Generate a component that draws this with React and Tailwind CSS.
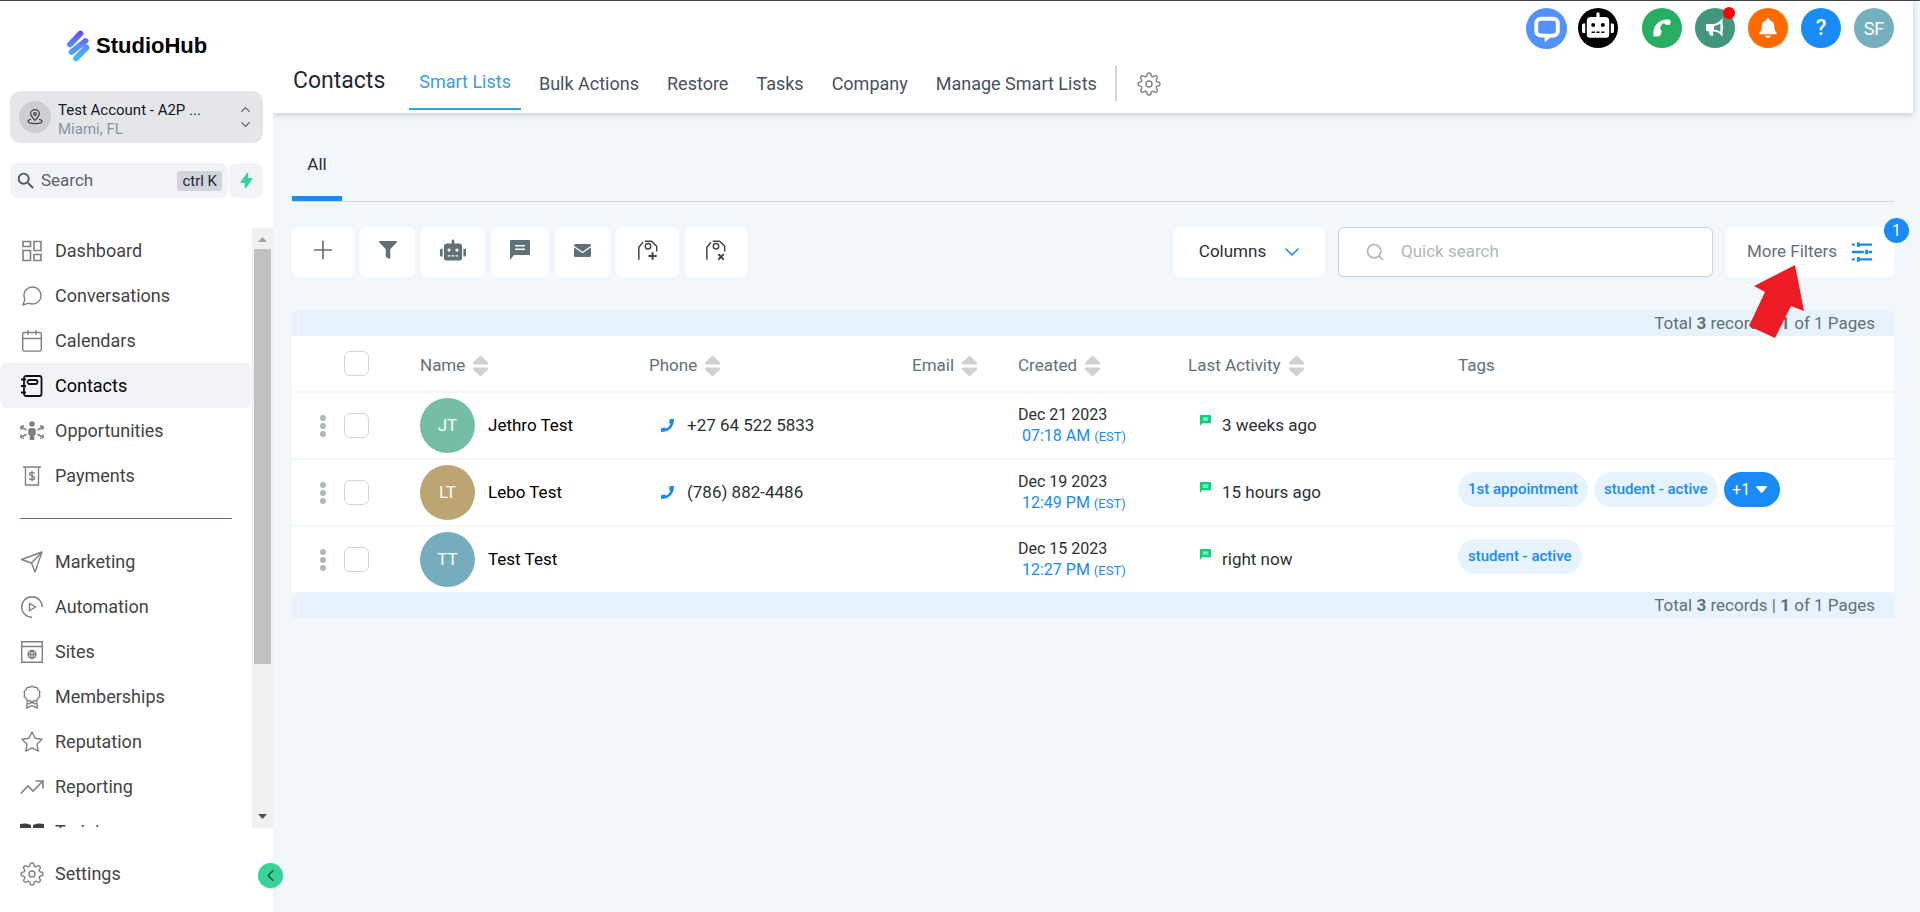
import { useState } from "react";
import { FaRobot, FaFilter, FaBell } from "react-icons/fa";
import { FiMessageCircle, FiSettings, FiStar, FiSearch, FiChevronDown, FiChevronUp, FiChevronLeft } from "react-icons/fi";
import { HiLightningBolt } from "react-icons/hi";
import { MdSearch } from "react-icons/md";

function Icon({ size = 24, children, ...rest }) {
  return (
    <svg width={size} height={size} viewBox="0 0 24 24" fill="none" stroke="currentColor" strokeWidth="1.4" aria-hidden="true" {...rest}>
      {children}
    </svg>
  );
}

const DashboardIcon = () => (
  <Icon strokeWidth="1.600">
    <path d="M3 2.500h7.500v5H3zM14 2.500h7v9h-7zM3 11.500h7.500v10H3zM14 15.500h7v6h-7z" />
  </Icon>
);

const CalendarIcon = () => (
  <Icon>
    <rect x="2.700" y="3.500" width="18.600" height="18.600" rx="1.500" />
    <path d="M2.700 9.500h18.600M8 1v5M16 1v5" />
  </Icon>
);

const ContactsIcon = () => (
  <Icon strokeWidth="1.800">
    <rect x="4" y="2" width="17.500" height="20" rx="2" />
    <rect x="7.500" y="6" width="10" height="4" rx="2" />
    <path d="M1 5.500h5M1 12h5M1 18.500h5" />
  </Icon>
);

const OpportunitiesIcon = () => (
  <Icon strokeWidth="1.500">
    <circle cx="12" cy="5" r="2.800" fill="currentColor" stroke="none" />
    <path d="M8.300 11a2 2 0 0 1 2-2h3.400a2 2 0 0 1 2 2v5h-1.400v5H9.700v-5H8.300z" fill="currentColor" stroke="none" />
    <path d="M6.500 11 1 8M1 10.700V7.600l3-.8M6.500 15.500 1 18M1 15.500v3l3 .8M17.500 11 23 8M23 10.700V7.600l-3-.8M17.500 15.500 23 18M23 15.500v3l-3 .8" />
  </Icon>
);

const PaymentsIcon = () => (
  <Icon>
    <path d="M3 3h18M5.500 3v18h13V3" />
    <path d="M14.500 9.600c-.4-.9-1.300-1.200-2.500-1.200-1.400 0-2.400.6-2.400 1.700 0 2.700 5 1.100 5 3.800 0 1.100-1.100 1.800-2.500 1.800-1.300 0-2.300-.5-2.700-1.500M12 6.800v10.400" />
  </Icon>
);

const MarketingIcon = () => (
  <Icon strokeLinejoin="round">
    <path d="M22 2 1.500 9.500l10 3.500L15 22zM22 2 11.500 13" />
  </Icon>
);

const AutomationIcon = () => (
  <Icon>
    <path d="M12 22.300A10.300 10.300 0 1 1 22.300 12" />
    <path d="M9.500 8.500v7l6-3.500z" />
  </Icon>
);

const SitesIcon = () => (
  <Icon>
    <path d="M1.700 1.700h20.600v20.600H1.700zM1.700 6.500h20.600" />
    <circle cx="12" cy="14.500" r="4" />
    <path d="M8 14.500h8M12 10.500c-2.400 2.500-2.400 5.500 0 8M12 10.500c2.400 2.500 2.400 5.500 0 8" />
  </Icon>
);

const MembershipsIcon = () => (
  <Icon strokeLinejoin="round">
    <path d="M12 1.200l2.300 1.100 2.500.1 1.100 2.300 1.900 1.700-.4 2.600.4 2.500-1.900 1.700-1.100 2.300-2.500.2L12 16.800l-2.300-1.100-2.500-.2-1.100-2.300-1.900-1.700.4-2.500-.4-2.600 1.900-1.700 1.100-2.300 2.500-.1z" />
    <path d="M7.500 15.500 6.500 23l5.500-2.300 5.500 2.300-1-7.500M8 19.200l4-1.700 4 1.700" />
  </Icon>
);

const ReportingIcon = () => (
  <Icon strokeWidth="1.600">
    <path d="M.8 18.500 8 11l5 5 9.500-9.500M15.500 6h7.500v7.500" />
  </Icon>
);

const TrainingIcon = () => (
  <Icon fill="#3f3f3f" stroke="none">
    <path d="M0 4c4-1 8-.8 11 1v15c-3-1.600-7-1.800-11-1zM24 4c-4-1-8-.8-11 1v15c3-1.600 7-1.800 11-1z" />
  </Icon>
);

const TagIcon = ({ remove }) => (
  <Icon size={22} strokeWidth="1.600" className="text-[#444]">
    <path d="M2 22.500V9L6.500 3.500M8.500 2.500h7.500l5.500 5.500v5.500" strokeLinejoin="round" />
    <circle cx="12" cy="8" r="3" />
    {remove ? <path d="m14.500 16.500 6 6M20.500 16.500l-6 6" strokeWidth="2.200" /> : <path d="M17 14.500v8M12.500 18.500h9" strokeWidth="2.200" />}
  </Icon>
);

const CommentIcon = ({ size, color }) => (
  <svg width={size} height={size} viewBox="0 0 20 20" aria-hidden="true">
    <path d="M1 0h18a1 1 0 0 1 1 1v14H4l-4 5V1a1 1 0 0 1 1-1z" fill={color} />
    <path d="M5 5.700h10M5 9.200h10" stroke="#fff" strokeWidth="1.600" />
  </svg>
);

const MailIcon = () => (
  <svg width="17" height="13" viewBox="0 0 17 13" aria-hidden="true">
    <rect width="17" height="13" rx="1.500" fill="#607179" />
    <path d="m0 2.500 8.500 6 8.500-6" fill="none" stroke="#fff" strokeWidth="1.300" />
  </svg>
);

const CallIcon = () => (
  <svg width="13" height="13" viewBox="0 0 13 13" fill="#188bf6" aria-hidden="true">
    <path d="M8.700 0H13c.3 7.500-5 13-13 13V9.300l3.500-.9 1.500 1.200C7.200 8.800 8.600 7.200 9.300 4.800L8.100 3.400z" />
  </svg>
);

const SortIcon = () => (
  <svg width="15" height="22" viewBox="0 0 15 22" fill="#d1d1d1" aria-hidden="true">
    <path d="M7.500.5 15 7.500V9a.6.600 0 0 1-.6.500H.6A.6.600 0 0 1 0 9V7.500zM7.500 21.500 15 14.500V13a.6.600 0 0 0-.6-.5H.6A.6.600 0 0 0 0 13v1.500z" />
  </svg>
);

const mainNav = [
  { label: "Dashboard", icon: <DashboardIcon /> },
  { label: "Conversations", icon: <FiMessageCircle size={24} strokeWidth="1.4" /> },
  { label: "Calendars", icon: <CalendarIcon /> },
  { label: "Contacts", icon: <ContactsIcon />, active: true },
  { label: "Opportunities", icon: <OpportunitiesIcon /> },
  { label: "Payments", icon: <PaymentsIcon /> },
];

const moreNav = [
  { label: "Marketing", icon: <MarketingIcon /> },
  { label: "Automation", icon: <AutomationIcon /> },
  { label: "Sites", icon: <SitesIcon /> },
  { label: "Memberships", icon: <MembershipsIcon /> },
  { label: "Reputation", icon: <FiStar size={24} strokeWidth="1.4" /> },
  { label: "Reporting", icon: <ReportingIcon /> },
  { label: "Training", icon: <TrainingIcon /> },
];

const tabs = ["Bulk Actions", "Restore", "Tasks", "Company", "Manage Smart Lists"];

const contacts = [
  { initials: "JT", color: "bg-[#76bda5]", name: "Jethro Test", phone: "+27 64 522 5833", date: "Dec 21 2023", time: "07:18 AM", activity: "3 weeks ago", tags: [] },
  { initials: "LT", color: "bg-[#bca573]", name: "Lebo Test", phone: "(786) 882-4486", date: "Dec 19 2023", time: "12:49 PM", activity: "15 hours ago", tags: ["1st appointment", "student - active"], more: 1 },
  { initials: "TT", color: "bg-[#76adbe]", name: "Test Test", phone: "", date: "Dec 15 2023", time: "12:27 PM", activity: "right now", tags: ["student - active"] },
];

function NavItem({ item }) {
  return (
    <a
      href="#"
      className={`flex h-[45px] shrink-0 items-center gap-[11px] rounded-lg pl-5 text-[18px] ${
        item.active ? "bg-[#f2f3f6] text-black" : "text-[#444]"
      }`}
    >
      <span className={item.active ? "text-[#111]" : "text-[#808080]"}>{item.icon}</span>
      {item.label}
    </a>
  );
}

function Logo() {
  return (
    <div className="flex h-[90px] items-center gap-[6px] pl-[67px]">
      <svg width="23" height="32" viewBox="0 0 23 32" aria-hidden="true">
        <defs>
          <linearGradient id="bars" x1="0" y1="0" x2="0" y2="32" gradientUnits="userSpaceOnUse">
            <stop offset="0" stopColor="#6a3fee" />
            <stop offset="0.500" stopColor="#5a8cfb" />
            <stop offset="1" stopColor="#3fc0ff" />
          </linearGradient>
        </defs>
        <path d="M3 14.500 13.500 3.500M4.500 22 18.500 11M9 28.500 19.500 17.500" stroke="url(#bars)" strokeWidth="5.800" strokeLinecap="round" />
      </svg>
      <span className="font-['Liberation_Sans',Arial,sans-serif] text-[22px] leading-8 font-bold text-black">StudioHub</span>
    </div>
  );
}

function Sidebar() {
  return (
    <aside className="relative flex w-[273px] shrink-0 flex-col bg-white">
      <Logo />
      <button className="mx-[10px] flex h-[52px] items-center rounded-[10px] bg-[#e5e6ea] pr-[10px] pl-[9px] text-left">
        <span className="flex size-8 items-center justify-center rounded-full bg-[#cdced1] text-[#444]">
          <Icon size={16} strokeWidth="1.900">
            <path d="M12 17c-4-4-6.500-6.500-6.500-9.500a6.500 6.500 0 0 1 13 0c0 3-2.500 5.500-6.500 9.500z" />
            <circle cx="12" cy="7.500" r="2" />
            <path d="M6 15.500c-3 .6-4.500 1.700-4.500 3 0 2 4 3.500 10.500 3.500s10.500-1.500 10.500-3.500c0-1.300-1.500-2.400-4.500-3" />
          </Icon>
        </span>
        <span className="ml-[7px] flex-1 pt-1">
          <span className="block text-[15px] leading-5 text-[#111827]">Test Account - A2P ...</span>
          <span className="block text-[15px] leading-[18px] text-[#8d939e]">Miami, FL</span>
        </span>
        <span className="flex flex-col text-[#5a5f69]">
          <FiChevronUp size={15} />
          <FiChevronDown size={15} />
        </span>
      </button>

      <div className="mx-[10px] mt-5 flex h-[35px] gap-px">
        <button className="flex flex-1 items-center rounded-lg bg-[#f2f3f6] pr-[6px] pl-[5px] text-[17px] text-[#5b626d]">
          <MdSearch size={22} className="text-[#4b5563]" />
          <span className="ml-1 flex-1 text-left">Search</span>
          <kbd className="rounded-[3px] bg-[#d1d4db] px-[5px] font-[Roboto,sans-serif] text-[15px] leading-5 text-[#1f2937]">ctrl K</kbd>
        </button>
        <button aria-label="Quick actions" className="flex w-[34px] items-center justify-center rounded-lg bg-[#f2f3f6] text-[#38d39a]">
          <HiLightningBolt size={17} />
        </button>
      </div>

      <div className="mt-[30px] flex min-h-0 flex-1">
        <nav className="flex flex-1 flex-col overflow-hidden">
          {mainNav.map((item) => (
            <NavItem key={item.label} item={item} />
          ))}
          <div role="separator" className="mx-5 my-5 h-px shrink-0 bg-[#667085]" />
          {moreNav.map((item) => (
            <NavItem key={item.label} item={item} />
          ))}
        </nav>
        <div className="flex w-[21px] flex-col items-center bg-[#f1f1f1]">
          <svg width="21" height="21" viewBox="0 0 21 21" fill="#a3a3a3" aria-hidden="true">
            <path d="M6 14h9l-4.500-5z" />
          </svg>
          <div className="w-[17px] flex-[415] bg-[#c1c1c1]" />
          <div className="flex-[143]" />
          <svg width="21" height="21" viewBox="0 0 21 21" fill="#505050" aria-hidden="true">
            <path d="M6 7h9l-4.500 5z" />
          </svg>
        </div>
      </div>

      <div className="h-[84px] pt-[23px]">
        <NavItem item={{ label: "Settings", icon: <FiSettings size={24} strokeWidth="1.4" /> }} />
      </div>
      <button
        aria-label="Collapse sidebar"
        className="absolute -right-[10px] bottom-6 z-10 flex size-[25px] items-center justify-center rounded-full bg-[#37d39a] text-[#14532d] shadow"
      >
        <FiChevronLeft size={19} />
      </button>
    </aside>
  );
}

function Header() {
  return (
    <header className="mr-[7px] flex h-[112px] shrink-0 justify-between bg-white pr-[19px] pl-5 shadow-[0_2px_6px_rgba(0,0,0,0.18)]">
      <div className="flex items-end">
        <h1 className="mr-6 mb-4 text-[23px] leading-8 text-[#1f2937]">Contacts</h1>
        <nav className="flex items-end gap-2 text-[18px] text-[#475161]">
          <a href="#" className="mb-[3px] flex h-[54px] items-center border-b-2 border-[#38a0db] px-[10px] pb-[2px] text-[#38a0db]">
            Smart Lists
          </a>
          {tabs.map((tab) => (
            <a key={tab} href="#" className="mb-[3px] flex h-[54px] items-center px-[10px]">
              {tab}
            </a>
          ))}
        </nav>
        <div className="mb-3 ml-2 h-[35px] w-[2px] bg-[#d0d3d8]" />
        <button aria-label="List settings" className="mb-[17px] ml-5 text-[#808080]">
          <FiSettings size={24} strokeWidth="1.4" />
        </button>
      </div>

      <div className="flex items-start pt-[7px] text-white">
        <button aria-label="Chat" className="mr-[11px] flex size-[41px] items-center justify-center rounded-full bg-[#5392fb]">
          <svg width="28" height="28" viewBox="0 0 26 26" fill="none" aria-hidden="true">
            <path d="M11.500 19.500V24l5-4.500z" fill="#fff" stroke="#fff" strokeWidth="1.500" strokeLinejoin="round" />
            <path d="M7 3.500h12a4 4 0 0 1 4 4v8a4 4 0 0 1-4 3.500q-3 .500-7 .200L7 19a4 4 0 0 1-4-4V7.500a4 4 0 0 1 4-4z" stroke="#fff" strokeWidth="3.600" />
          </svg>
        </button>
        <button aria-label="Assistant" className="mr-6 flex size-10 items-start justify-center rounded-full bg-black pt-[1px]">
          <FaRobot size={32} />
        </button>
        <div className="flex gap-[13px]">
          <button aria-label="Call" className="flex size-10 items-center justify-center rounded-full bg-[#27ae60]">
            <svg width="20" height="20" viewBox="0 0 20 20" fill="#fff" aria-hidden="true">
              <path d="M1.500 18C.3 10.500 4.500 3.700 11.500 2c2.500-.6 6.300-.6 6.900.2.500.8.100 3.600-.5 4.500-.6.800-4.500.3-5.200-.6-.4-.5-.2-.9-.6-1.100C9.500 6 8.200 8.500 8 11.400c.4.200 1 0 1.400.7.500.9-.2 4.400-1.200 5.400-.9.900-6.300 1.700-6.700.5z" />
            </svg>
          </button>
          <button aria-label="Announcements" className="relative flex size-10 items-center justify-center rounded-full bg-[#43957e]">
            <svg width="20" height="20" viewBox="0 0 20 20" aria-hidden="true">
              <path d="M1 6h8v7H1z" fill="#fff" />
              <path d="M3 12h4.500l1 5.500H5z" fill="#fff" />
              <path d="M8 7c3 0 6-1.500 8.500-4v13C14 13.500 11 12.500 8 12.500zM17 7.500v4" fill="none" stroke="#fff" strokeWidth="2.200" />
            </svg>
            <span className="absolute -top-px right-0 size-[12px] rounded-full bg-[#ff0000]" />
          </button>
          <button aria-label="Notifications" className="flex size-10 items-center justify-center rounded-full bg-[#ff6a00]">
            <FaBell size={20} />
          </button>
          <button aria-label="Help" className="flex size-10 items-center justify-center rounded-full bg-[#188bf6] text-[22px] leading-none font-medium">
            ?
          </button>
          <button aria-label="Profile" className="flex size-10 items-center justify-center rounded-full bg-[#76b0bf] text-[18px]">
            SF
          </button>
        </div>
      </div>
    </header>
  );
}

function Toolbar() {
  const btn = "flex items-center justify-center rounded-md bg-white pb-1 text-[#607179]";
  return (
    <div className="mt-[25px] flex h-[50px] justify-between">
      <div className="flex gap-[6px]">
        <button aria-label="Add contact" className={`${btn} w-[62px]`}>
          <Icon size={20} strokeWidth="2">
            <path d="M12 1v22M1 12h22" />
          </Icon>
        </button>
        <button aria-label="Pipeline change" className={`${btn} w-[55px]`}>
          <FaFilter size={18} />
        </button>
        <button aria-label="Add to automation" className={`${btn} w-[64px]`}>
          <FaRobot size={26} />
        </button>
        <button aria-label="Send SMS" className={`${btn} w-[58px]`}>
          <CommentIcon size={20} color="#607179" />
        </button>
        <button aria-label="Send email" className={`${btn} w-[55px]`}>
          <MailIcon />
        </button>
        <button aria-label="Add tag" className={`${btn} w-[63px]`}>
          <TagIcon />
        </button>
        <button aria-label="Remove tag" className={`${btn} w-[62px]`}>
          <TagIcon remove />
        </button>
      </div>

      <div className="flex gap-[13px]">
        <button className="flex w-[151px] items-center justify-center gap-[14px] rounded-md bg-white pl-1 text-[17px] text-[#2a3135]">
          Columns
          <FiChevronDown size={24} strokeWidth="1.6" className="text-[#188bf6]" />
        </button>
        <label className="flex w-[375px] items-center gap-4 rounded-md border border-[#d0d5dd] bg-white pl-[26px] text-[#afb8bc] shadow-xs">
          <FiSearch size={20} />
          <input type="text" aria-label="Quick search" placeholder="Quick search" className="min-w-0 flex-1 text-[17px] outline-none placeholder:text-[#afb8bc]" />
        </label>
        <button className="relative flex w-[168px] items-center justify-center gap-[14px] rounded-md bg-white text-[17px] text-[#607179]">
          More Filters
          <Icon size={22} strokeWidth="2.600" className="text-[#188bf6]">
            <path d="M1 4h3M7 4h16M1 12h13M19 12h4M1 20h3M7 20h16" />
            <path d="M8 1.500v5M17 9.500v5M8 17.500v5" strokeWidth="3" />
          </Icon>
          <span className="absolute -top-[9px] -right-[15px] flex size-[25px] items-center justify-center rounded-full bg-[#188bf6] text-[16px] leading-none text-white">
            1
          </span>
          {/* pointer over the filter button */}
          <svg className="pointer-events-none absolute top-[38px] left-[22px] z-10" width="58" height="74" viewBox="0 0 58 74" fill="#ed1c24" aria-hidden="true">
            <path d="M47 0 56 46 43 41 27 73 1 61 17 27 6 21z" />
          </svg>
        </button>
      </div>
    </div>
  );
}

function Totals() {
  return (
    <div className="h-[26px] rounded-t-lg bg-[#e8f2fd] pr-[19px] text-right text-[17px] leading-[26px] text-[#607179]">
      Total <b>3</b> records | <b>1</b> of 1 Pages
    </div>
  );
}

function Checkbox({ label, checked, onChange }) {
  return (
    <input
      type="checkbox"
      aria-label={label}
      checked={checked}
      onChange={onChange}
      className="block size-[25px] appearance-none rounded-md border border-[#d0d5dd] bg-white checked:bg-[#188bf6]"
    />
  );
}

function ContactsTable() {
  const [selected, setSelected] = useState([]);
  const allSelected = selected.length === contacts.length;

  function toggle(name) {
    setSelected((prev) => (prev.includes(name) ? prev.filter((n) => n !== name) : [...prev, name]));
  }

  return (
    <table className="w-full table-fixed bg-white text-left text-[17px] text-[#2a3135]">
      <colgroup>
        <col className="w-[128px]" />
        <col className="w-[229px]" />
        <col className="w-[263px]" />
        <col className="w-[106px]" />
        <col className="w-[170px]" />
        <col className="w-[270px]" />
        <col />
      </colgroup>
      <thead>
        <tr className="h-[56px] border-b-2 border-[#f1f7fa] text-[#607179]">
          <th className="pl-[52px]">
            <Checkbox label="Select all" checked={allSelected} onChange={() => setSelected(allSelected ? [] : contacts.map((c) => c.name))} />
          </th>
          {["Name", "Phone", "Email", "Created", "Last Activity"].map((title) => (
            <th key={title} className="pt-1 font-normal">
              <button className="flex items-center gap-2">
                {title}
                <SortIcon />
              </button>
            </th>
          ))}
          <th className="pt-1 font-normal">Tags</th>
        </tr>
      </thead>
      <tbody>
        {contacts.map((c) => (
          <tr key={c.name} className="h-[67px] border-b-2 border-[#f1f7fa] last:h-[66px] last:border-b-0">
            <td>
              <div className="flex items-center">
                <button aria-label={`Actions for ${c.name}`} className="mr-[18px] ml-[28px]">
                  <svg width="6" height="22" viewBox="0 0 6 22" fill="#afb8bc" aria-hidden="true">
                    <circle cx="3" cy="3" r="3" />
                    <circle cx="3" cy="11" r="3" />
                    <circle cx="3" cy="19" r="3" />
                  </svg>
                </button>
                <Checkbox label={`Select ${c.name}`} checked={selected.includes(c.name)} onChange={() => toggle(c.name)} />
              </div>
            </td>
            <td>
              <a href="#" className="flex items-center gap-[13px] text-black">
                <span className={`flex size-[55px] items-center justify-center rounded-full text-white ${c.color}`}>{c.initials}</span>
                {c.name}
              </a>
            </td>
            <td>
              {c.phone && (
                <a href="#" className="flex items-center gap-[13px] pl-3">
                  <CallIcon />
                  {c.phone}
                </a>
              )}
            </td>
            <td></td>
            <td className="text-[16px] leading-[21px]">
              {c.date}
              <div className="pl-1 text-[#188bf6]">
                {c.time} <span className="text-[13px]">(EST)</span>
              </div>
            </td>
            <td>
              <div className="flex items-start gap-[11px] pb-[2px] pl-3 leading-5">
                <CommentIcon size={11} color="#06d27a" />
                {c.activity}
              </div>
            </td>
            <td>
              <div className="flex items-center gap-[6px] pb-[6px] text-[15px] font-medium">
                {c.tags.map((tag) => (
                  <span key={tag} className="rounded-full bg-[#e7f3ff] px-[10px] leading-[35px] text-[#188bf6]">
                    {tag}
                  </span>
                ))}
                {c.more && (
                  <button className="flex h-[35px] w-[56px] items-center justify-center gap-[6px] rounded-full bg-[#188bf6] pr-1 text-[16px] font-normal text-white">
                    +{c.more}
                    <svg width="11" height="7" viewBox="0 0 11 7" fill="#fff" aria-hidden="true">
                      <path d="M1 0h9q1.500.2.600 1.500L6.300 6.500q-.8.800-1.600 0L.4 1.500Q-.5.200 1 0z" />
                    </svg>
                  </button>
                )}
              </div>
            </td>
          </tr>
        ))}
      </tbody>
    </table>
  );
}

export default function App() {
  return (
    <div className="flex h-screen border-t border-[#454449] bg-[#f1f7fa] font-[Roboto,sans-serif]">
      <Sidebar />
      <div className="flex min-w-0 flex-1 flex-col">
        <Header />
        <main className="flex-1 pr-[26px] pl-[19px]">
          <div className="mt-[33px] flex border-b border-[#d5dcdf]">
            <a href="#" className="flex h-[55px] w-[50px] justify-center border-b-[5px] border-[#188bf6] pt-[6px] text-[17px] text-[#2a3135]">
              All
            </a>
          </div>
          <Toolbar />
          <div className="mt-[33px]">
            <Totals />
            <ContactsTable />
            <Totals />
          </div>
        </main>
      </div>
    </div>
  );
}
